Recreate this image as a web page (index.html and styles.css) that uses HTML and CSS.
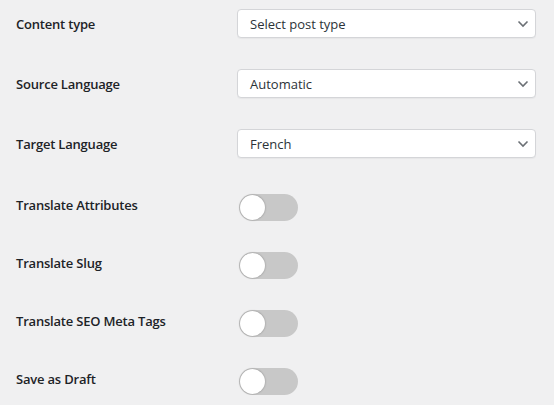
FILE: index.html
```html
<!DOCTYPE html>
<html>
<head>
<meta charset="utf-8">
<link rel="stylesheet" href="styles.css">
</head>
<body>
<div class="form">
  <div class="row">
    <div class="label">Content type</div>
    <div class="select"><span>Select post type</span><svg class="chev" viewBox="0 0 12 8" width="12" height="8"><path d="M1.5 1.5 L6 6 L10.5 1.5" fill="none" stroke="#6b7075" stroke-width="1.6"/></svg></div>
  </div>
  <div class="row">
    <div class="label">Source Language</div>
    <div class="select"><span>Automatic</span><svg class="chev" viewBox="0 0 12 8" width="12" height="8"><path d="M1.5 1.5 L6 6 L10.5 1.5" fill="none" stroke="#6b7075" stroke-width="1.6"/></svg></div>
  </div>
  <div class="row">
    <div class="label">Target Language</div>
    <div class="select"><span>French</span><svg class="chev" viewBox="0 0 12 8" width="12" height="8"><path d="M1.5 1.5 L6 6 L10.5 1.5" fill="none" stroke="#6b7075" stroke-width="1.6"/></svg></div>
  </div>
  <div class="row toggles-start">
    <div class="label up">Translate Attributes</div>
    <div class="toggle"><div class="knob"></div></div>
  </div>
  <div class="row">
    <div class="label up">Translate Slug</div>
    <div class="toggle"><div class="knob"></div></div>
  </div>
  <div class="row">
    <div class="label up">Translate SEO Meta Tags</div>
    <div class="toggle"><div class="knob"></div></div>
  </div>
  <div class="row">
    <div class="label up">Save as Draft</div>
    <div class="toggle"><div class="knob"></div></div>
  </div>
</div>
</body>
</html>
```
FILE: styles.css
```css
html, body {
  margin: 0;
  padding: 0;
  background: #f0f0f1;
}
body {
  font-family: "Open Sans", "Noto Sans", "Liberation Sans", sans-serif;
  color: #1d2327;
}
.form {
  display: flex;
  flex-direction: column;
  gap: 31px;
  padding: 9px 0 0 16px;
}
.row {
  display: flex;
  align-items: center;
}
.toggles-start {
  margin-top: 5px;
}
.label {
  width: 221px;
  font-size: 13px;
  font-weight: 600;
  letter-spacing: -0.2px;
}
.label.up {
  margin-bottom: 6px;
}
.select {
  box-sizing: border-box;
  width: 299px;
  height: 29px;
  background: #fff;
  border: 1px solid #d4d5d8;
  border-radius: 4px;
  box-shadow: 0 1px 1px rgba(0,0,0,0.04);
  display: flex;
  align-items: center;
  justify-content: space-between;
  padding: 0 6px 0 12px;
  font-size: 13px;
  color: #2c3338;
}
.chev {
  display: block;
  margin-top: 1px;
}
.toggle {
  box-sizing: border-box;
  width: 59px;
  height: 27px;
  margin-left: 2px;
  border-radius: 14px;
  background: #c8c8c8;
  display: flex;
  align-items: center;
  padding: 0 1px;
}
.knob {
  width: 25px;
  height: 25px;
  border-radius: 50%;
  background: #fff;
  box-shadow: 0 0 2px rgba(0,0,0,0.35);
}
```
